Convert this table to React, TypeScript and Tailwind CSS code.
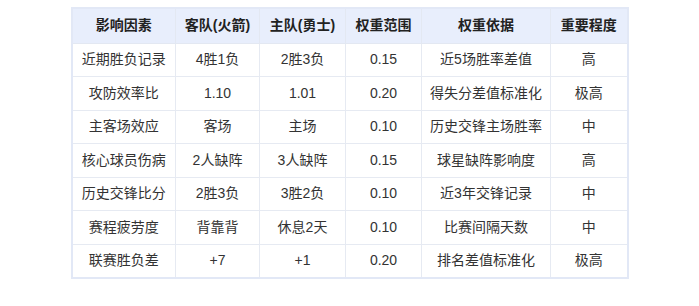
const headers = ["影响因素", "客队(火箭)", "主队(勇士)", "权重范围", "权重依据", "重要程度"];

const rows = [
  ["近期胜负记录", "4胜1负", "2胜3负", "0.15", "近5场胜率差值", "高"],
  ["攻防效率比", "1.10", "1.01", "0.20", "得失分差值标准化", "极高"],
  ["主客场效应", "客场", "主场", "0.10", "历史交锋主场胜率", "中"],
  ["核心球员伤病", "2人缺阵", "3人缺阵", "0.15", "球星缺阵影响度", "高"],
  ["历史交锋比分", "2胜3负", "3胜2负", "0.10", "近3年交锋记录", "中"],
  ["赛程疲劳度", "背靠背", "休息2天", "0.10", "比赛间隔天数", "中"],
  ["联赛胜负差", "+7", "+1", "0.20", "排名差值标准化", "极高"],
];

const widths = ["w-[104px]", "w-[84px]", "w-[86px]", "w-[76px]", "w-[129px]", "w-[77px]"];

export default function App() {
  return (
    <div
      className="w-[699px] h-[306px] bg-white pt-[7px] flex justify-center"
      style={{ fontFamily: '"Liberation Sans", "Noto Sans CJK SC", sans-serif' }}
    >
      <table className="w-[556px] h-fit border-collapse border-2 border-[#e2e8f6] text-[14px] table-fixed">
        <thead>
          <tr className="bg-[#e8eefc] h-[35px]">
            {headers.map((h, i) => (
              <th key={h} className={`${widths[i]} border border-[#e3e8f2] font-bold text-[#222] text-center p-0`}>
                {h}
              </th>
            ))}
          </tr>
        </thead>
        <tbody>
          {rows.map((r) => (
            <tr key={r[0]} className="h-[33.5px]">
              {r.map((c, i) => (
                <td key={i} className="border border-[#e6eaf2] text-center text-[#333] p-0">
                  {c}
                </td>
              ))}
            </tr>
          ))}
        </tbody>
      </table>
    </div>
  );
}
